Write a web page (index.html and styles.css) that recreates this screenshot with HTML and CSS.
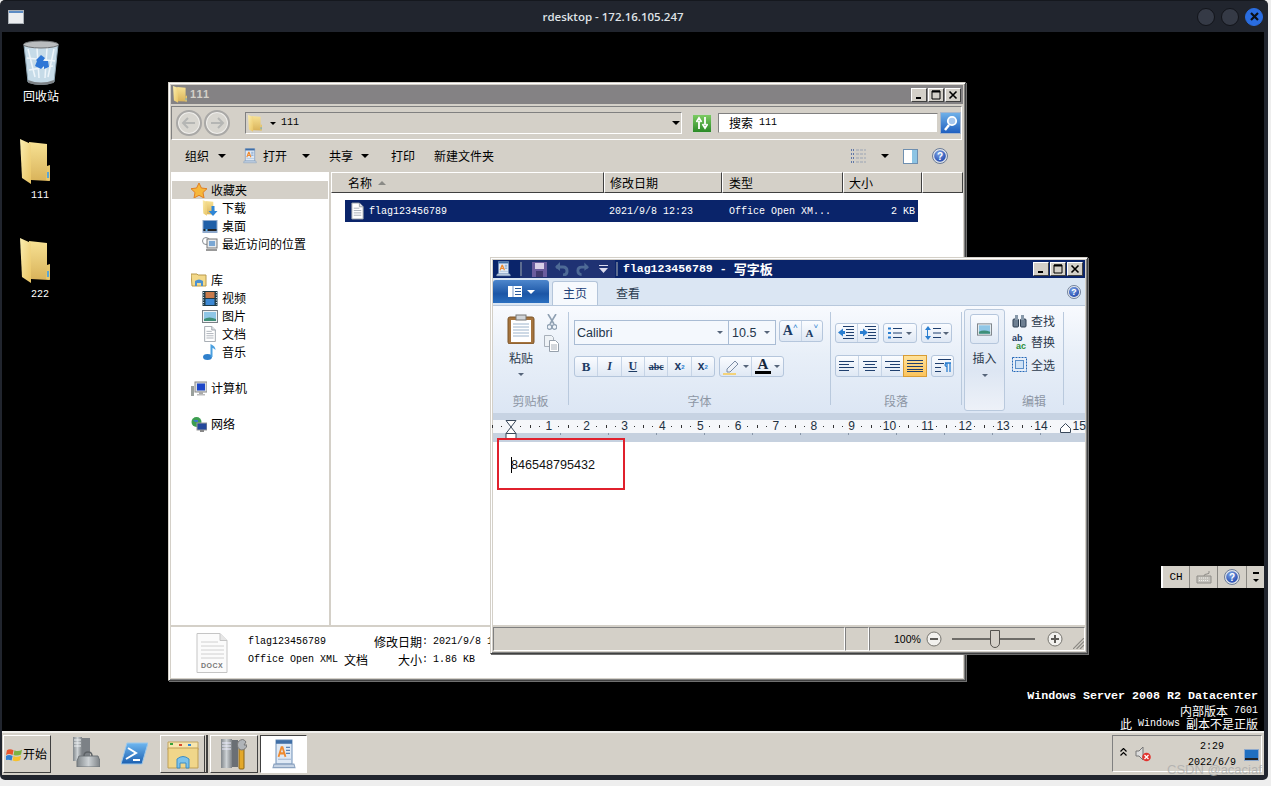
FILE: index.html
```html
<!DOCTYPE html>
<html lang="zh">
<head>
<meta charset="utf-8">
<title>rdesktop - 172.16.105.247</title>
<link rel="stylesheet" href="styles.css">
</head>
<body>
<svg class="defs" width="0" height="0" aria-hidden="true">
  <defs>
    <linearGradient id="gFolder" x1="0" y1="0" x2="1" y2="1"><stop offset="0" stop-color="#fbeeb0"/><stop offset="1" stop-color="#e9c463"/></linearGradient>
    <linearGradient id="gFolderBack" x1="0" y1="0" x2="0" y2="1"><stop offset="0" stop-color="#f7e193"/><stop offset="1" stop-color="#d9b35a"/></linearGradient>
    <linearGradient id="gBlue" x1="0" y1="0" x2="0" y2="1"><stop offset="0" stop-color="#6fb7f0"/><stop offset="1" stop-color="#1b5fb0"/></linearGradient>
    <linearGradient id="gSteel" x1="0" y1="0" x2="1" y2="0"><stop offset="0" stop-color="#80868a"/><stop offset=".5" stop-color="#cdd2d5"/><stop offset="1" stop-color="#7c8185"/></linearGradient>
    <radialGradient id="gHelp" cx=".4" cy=".3" r=".8"><stop offset="0" stop-color="#7ea6e6"/><stop offset="1" stop-color="#1a3fa8"/></radialGradient>
    <symbol id="i-folder" viewBox="0 0 30 46" preserveAspectRatio="none">
      <polygon points="9,3 27,5 27,37 29,37 29,42 11,41" fill="url(#gFolderBack)"/>
      <polygon points="27,27 30,26 30,42 26,41" fill="#e6c66c"/>
      <rect x="27" y="33" width="2" height="6" fill="#5aa6d6"/>
      <polygon points="0,0 11,5 11,45 2,39" fill="url(#gFolder)"/>
    </symbol>
    <symbol id="i-doc" viewBox="0 0 16 18">
      <path d="M2 .5h8l4 4v13H2z" fill="#fff" stroke="#9aa0a8"/>
      <path d="M10 .5v4h4" fill="#dfe3e8" stroke="#9aa0a8"/>
      <path d="M4 6h6M4 8.500h8M4 11h8M4 13.500h8" stroke="#a8aeb6"/>
    </symbol>
    <symbol id="i-wordpad" viewBox="0 0 24 26" preserveAspectRatio="none">
      <path d="M4 1h16v20H4z" fill="#dfe9f5" stroke="#6e8fb8"/>
      <path d="M4 1h16v3H4z" fill="#3f6ea6"/>
      <path d="M6.500 15l3-8h1l3 8M8 12h4" stroke="#ef8a30" stroke-width="1.800" fill="none"/>
      <path d="M14 7h4M14 9.500h4M14 12h4" stroke="#5a84b8"/>
      <path d="M6 17h13" stroke="#a8bcd6"/>
      <path d="M2 21h20l1 3H1z" fill="#c5d3e4" stroke="#8ca3c0"/>
    </symbol>
    <symbol id="i-x" viewBox="0 0 10 10"><path d="M1.500 1.500l7 7M8.500 1.500l-7 7" stroke="#000" stroke-width="1.600"/></symbol>
    <symbol id="i-max" viewBox="0 0 10 10"><path d="M1 1h8v8H1z" fill="none" stroke="#000"/><path d="M1 1.500h8" stroke="#000" stroke-width="2"/></symbol>
    <symbol id="i-min" viewBox="0 0 10 10"><path d="M2 8h5" stroke="#000" stroke-width="2"/></symbol>
    <symbol id="i-help" viewBox="0 0 16 16">
      <circle cx="8" cy="8" r="7.500" fill="#dfe3ea" stroke="#6a7b96"/>
      <circle cx="8" cy="8" r="5.800" fill="url(#gHelp)"/>
      <text x="8" y="11.500" class="help-q">?</text>
    </symbol>
    <symbol id="i-lines" viewBox="0 0 16 12"><path d="M0 .5h16M0 3.500h16M0 6.500h16M0 9.500h16M0 11.500h16" stroke="#1f3f6e"/></symbol>
    <symbol id="i-left" viewBox="0 0 16 12"><path d="M0 1.500h15M0 4.500h10M0 7.500h15M0 10.500h10" stroke="#1f3f6e"/></symbol>
    <symbol id="i-center" viewBox="0 0 16 12"><path d="M1 1.500h14M3 4.500h10M1 7.500h14M3 10.500h10" stroke="#1f3f6e"/></symbol>
    <symbol id="i-right" viewBox="0 0 16 12"><path d="M1 1.500h15M6 4.500h10M1 7.500h15M6 10.500h10" stroke="#1f3f6e"/></symbol>
    <symbol id="i-outdent" viewBox="0 0 16 14"><path d="M5 .5h11M8 3.500h8M8 6.500h8M8 9.500h8M5 12.500h11" stroke="#1f3f6e"/><path d="M5 6.500h2" stroke="#2a7ed0" stroke-width="3"/><path d="M0 6.500L5 2.500v8z" fill="#2a7ed0"/></symbol>
    <symbol id="i-indent" viewBox="0 0 16 14"><path d="M5 .5h11M8 3.500h8M8 6.500h8M8 9.500h8M5 12.500h11" stroke="#1f3f6e"/><path d="M0 6.500h3" stroke="#2a7ed0" stroke-width="3"/><path d="M8 6.500L3 2.500v8z" fill="#2a7ed0"/></symbol>
    <symbol id="i-caret-plus" viewBox="0 0 16 16"><circle cx="8" cy="8" r="7" fill="#f2f1ee" stroke="#77756f"/><path d="M4 8h8M8 4v8" stroke="#5d5b57" stroke-width="2"/></symbol>
    <symbol id="i-caret-minus" viewBox="0 0 16 16"><circle cx="8" cy="8" r="7" fill="#f2f1ee" stroke="#77756f"/><path d="M4 8h8" stroke="#5d5b57" stroke-width="2"/></symbol>
  </defs>
</svg>

<div class="screen">
  <header class="rd-top">
    <svg class="rd-icon" width="16" height="14" viewBox="0 0 16 14"><rect x=".5" y=".5" width="15" height="13" fill="#eceef0" stroke="#aab0b6"/><rect x="1" y="1" width="14" height="2" fill="#5d8cc4"/></svg>
    <div class="rd-title">rdesktop - 172.16.105.247</div>
    <div class="rd-btns">
      <span class="rd-btn"></span><span class="rd-btn"></span><span class="rd-btn rd-close"><svg width="9" height="9" viewBox="0 0 9 9"><path d="M1 1l7 7M8 1L1 8" stroke="#0c1016" stroke-width="2.200"/></svg></span>
    </div>
  </header>

  <main class="desk">
    <div class="dicon dicon-bin">
      <svg width="36" height="46" viewBox="0 0 36 46">
        <path d="M1 5h34l-4 37q-13 5-26 0z" fill="#c6dbe8" stroke="#8ea6b4"/>
        <path d="M5 9l7 28M14 8l2 30M24 8l-2 30M31 9l-6 28M4 18l28 3M6 30l24-4" stroke="#eef5fa" stroke-width="1.500" fill="none"/>
        <ellipse cx="18" cy="4.500" rx="17.500" ry="3.500" fill="#b9bcbe" stroke="#6f7275"/>
        <path d="M5 40q13 5 26 0l-.4 3q-12.600 4-25.200 0z" fill="#7c8084"/>
        <path d="M13 20l5-5 4 3-2 3h5l1 6-5 2v-3l-3 3-6-3 2-5z" fill="#2f77d6"/>
      </svg>
      <span class="dlabel">回收站</span>
    </div>
    <div class="dicon dicon-111">
      <svg class="dfolder" width="30" height="46"><use href="#i-folder"/></svg>
      <span class="dlabel dlabel-m">111</span>
    </div>
    <div class="dicon dicon-222">
      <svg class="dfolder" width="30" height="46"><use href="#i-folder"/></svg>
      <span class="dlabel dlabel-m">222</span>
    </div>

    <section class="win explorer">
      <div class="ex-title">
        <svg width="14" height="17"><use href="#i-folder"/></svg>
        <span class="ex-title-text">111</span>
        <div class="wbtns"><span class="wb"><svg width="10" height="10"><use href="#i-min"/></svg></span><span class="wb"><svg width="10" height="10"><use href="#i-max"/></svg></span><span class="wb"><svg width="10" height="10"><use href="#i-x"/></svg></span></div>
      </div>
      <div class="ex-addr">
        <span class="navb"><svg width="16" height="12" viewBox="0 0 16 12"><path d="M7 1L2 6l5 5M2 6h12" fill="none" stroke="#b5b6b4" stroke-width="2"/></svg></span>
        <span class="navb navb-2"><svg width="16" height="12" viewBox="0 0 16 12"><path d="M9 1l5 5-5 5M14 6H2" fill="none" stroke="#b5b6b4" stroke-width="2"/></svg></span>
        <div class="addrbox">
          <svg width="14" height="17"><use href="#i-folder"/></svg>
          <span class="caret caret-s addr-caret"></span>
          <span class="m addr-text">111</span>
          <span class="caret addr-drop"></span>
        </div>
        <span class="refresh"><svg width="12" height="14" viewBox="0 0 12 14"><path d="M3 13V5M0.500 6L3 2l2.500 4M9 1v8M6.500 8L9 12l2.500-4" fill="none" stroke="#fff" stroke-width="1.800"/></svg></span>
        <div class="searchbox"><span class="z">搜索</span><span class="m search-q">111</span></div>
        <span class="searchbtn"><svg width="15" height="17" viewBox="0 0 15 17"><circle cx="9" cy="6" r="4.200" fill="#a8c8ee" stroke="#fff" stroke-width="1.800"/><path d="M6 10l-4 5" stroke="#fff" stroke-width="2.400"/></svg></span>
      </div>
      <div class="ex-tool">
        <span class="z t-org">组织</span><span class="caret t-c1"></span>
        <svg class="t-open" width="14" height="16"><use href="#i-wordpad"/></svg>
        <span class="z t-opent">打开</span><span class="caret t-c2"></span>
        <span class="z t-share">共享</span><span class="caret t-c3"></span>
        <span class="z t-print">打印</span>
        <span class="z t-new">新建文件夹</span>
        <svg class="t-view" width="16" height="14" viewBox="0 0 16 14"><path d="M0 1h3M0 5h3M0 9h3M0 13h3" stroke="#6078a8" stroke-width="2" stroke-dasharray="1 1"/><path d="M5 1h10M5 5h10M5 9h10M5 13h10" stroke="#9aa4b4" stroke-dasharray="3 1"/></svg>
        <span class="caret t-c4"></span>
        <svg class="t-panel" width="15" height="15" viewBox="0 0 15 15"><rect x=".5" y=".5" width="14" height="14" fill="#fff" stroke="#6e8fb0"/><rect x="9" y="1" width="5" height="13" fill="#8cc4e4"/></svg>
        <svg class="t-help" width="16" height="16"><use href="#i-help"/></svg>
      </div>
      <div class="ex-main">
        <nav class="ex-nav">
          <div class="nr nr-sel"><svg class="nic" width="16" height="15" viewBox="0 0 16 15"><path d="M8 0l2.400 5 5.600.7-4 3.800 1 5.500-5-2.700L3 15l1-5.500-4-3.800L5.600 5z" fill="#f6b73c" stroke="#e07f22"/></svg><span class="z">收藏夹</span></div>
          <div class="nr nr-2"><svg class="nic" width="15" height="16" viewBox="0 0 15 16"><use href="#i-folder" width="12" height="16"/><path d="M9 6h3v5h3l-4.500 5L6 11h3z" fill="#2f86d6"/></svg><span class="z">下载</span></div>
          <div class="nr nr-2"><svg class="nic" width="15" height="13" viewBox="0 0 15 13"><rect width="15" height="13" fill="#8ea9cc"/><rect x="1" y="1" width="13" height="10" fill="#1f5fa8"/><rect x="1" y="9" width="13" height="2" fill="#222"/><rect x="3" y="9" width="2" height="2" fill="#58b0f0"/></svg><span class="z">桌面</span></div>
          <div class="nr nr-2"><svg class="nic" width="16" height="15" viewBox="0 0 16 15"><circle cx="4" cy="4" r="3.500" fill="#fff" stroke="#8a8f95"/><rect x="5" y="2" width="10" height="9" fill="#e6eaee" stroke="#777"/><rect x="7" y="4" width="6" height="5" fill="#7aa7d4"/><rect x="4" y="12" width="11" height="2" fill="#999"/></svg><span class="z">最近访问的位置</span></div>
          <div class="nr nr-gap"></div>
          <div class="nr nr-1"><svg class="nic" width="16" height="14" viewBox="0 0 16 14"><path d="M0 1h6l1 1h8v11H1z" fill="#f3d98a" stroke="#b99a4c"/><path d="M4 13V8q4-3 8 0v5h-2v-3H6v3z" fill="#4a90d0"/></svg><span class="z">库</span></div>
          <div class="nr nr-2"><svg class="nic" width="15" height="15" viewBox="0 0 15 15"><rect width="15" height="15" fill="#1e3a46"/><rect x="3" y="1" width="9" height="6" fill="#c87a4a"/><rect x="3" y="8" width="9" height="6" fill="#3c88d4"/><path d="M1 1v13M14 1v13" stroke="#cfe0ea" stroke-dasharray="1 1.500" stroke-width="1.200"/></svg><span class="z">视频</span></div>
          <div class="nr nr-2"><svg class="nic" width="16" height="13" viewBox="0 0 16 13"><rect x=".5" y=".5" width="15" height="12" fill="#eef1f3" stroke="#7a8086"/><rect x="2" y="2" width="12" height="9" fill="#8fc6e6"/><path d="M2 9q5-3 12 0v2H2z" fill="#3f8f78"/></svg><span class="z">图片</span></div>
          <div class="nr nr-2"><svg class="nic" width="15" height="16"><use href="#i-doc"/></svg><span class="z">文档</span></div>
          <div class="nr nr-2"><svg class="nic" width="15" height="16" viewBox="0 0 15 16"><ellipse cx="5" cy="13" rx="4.500" ry="3" fill="#2f80cc"/><path d="M8 13V0q5 2 5 6-2-2-3-2v9z" fill="#4ba0e0"/></svg><span class="z">音乐</span></div>
          <div class="nr nr-gap"></div>
          <div class="nr nr-1"><svg class="nic" width="16" height="15" viewBox="0 0 16 15"><rect x="4" y="1" width="12" height="10" fill="#d9dde0" stroke="#888"/><rect x="6" y="2.500" width="8" height="7" fill="#1c46c8"/><rect x="8" y="11" width="4" height="2" fill="#aaa"/><rect x="6" y="13" width="8" height="1.500" fill="#bbb"/><rect y="5" width="3" height="10" fill="#9aa09c"/></svg><span class="z">计算机</span></div>
          <div class="nr nr-gap"></div>
          <div class="nr nr-1"><svg class="nic" width="16" height="15" viewBox="0 0 16 15"><circle cx="5.500" cy="5" r="5" fill="#3c9e50"/><path d="M2 3h5v2H4zM6 7h3v2H7z" fill="#3a78cc"/><rect x="6" y="6" width="10" height="7" fill="#24489c" stroke="#999"/><rect x="9" y="13" width="4" height="2" fill="#888"/></svg><span class="z">网络</span></div>
        </nav>
        <div class="ex-list">
          <div class="lh">
            <div class="lc lc-name"><span class="z">名称</span><span class="sort"></span></div>
            <div class="lc lc-date"><span class="z">修改日期</span></div>
            <div class="lc lc-type"><span class="z">类型</span></div>
            <div class="lc lc-size"><span class="z">大小</span></div>
            <div class="lc lc-end"></div>
          </div>
          <div class="row">
            <svg class="row-ic" width="15" height="18"><use href="#i-doc"/></svg>
            <span class="m row-name">flag123456789</span>
            <span class="m row-date">2021/9/8 12:23</span>
            <span class="m row-type">Office Open XM...</span>
            <span class="m row-size">2 KB</span>
          </div>
        </div>
      </div>
      <footer class="ex-status">
        <svg class="docx" width="32" height="40" viewBox="0 0 32 40">
          <path d="M1 .5h23l7 7V39.500H1z" fill="#fbfbfb" stroke="#c5c5c5"/>
          <path d="M24 .5v7h7" fill="#e6e6e6" stroke="#c5c5c5"/>
          <path d="M5 9h17M5 13h23M5 17h23M5 21h23M5 25h23" stroke="#d0d0d0"/>
          <text x="16" y="35" class="docx-t">DOCX</text>
        </svg>
        <div class="st-cols">
          <div class="st-row"><span class="m st-a">flag123456789</span><span class="z">修改日期</span><span class="m">:</span><span class="m st-v">2021/9/8 12:23</span></div>
          <div class="st-row"><span class="m">Office Open XML</span><span class="z st-doc">文档</span><span class="z">大小</span><span class="m">:</span><span class="m st-v">1.86 KB</span></div>
        </div>
      </footer>
    </section>

    <section class="win wordpad">
      <div class="wp-title">
        <svg class="wpt-ic" width="15" height="16"><use href="#i-wordpad"/></svg>
        <span class="wpt-sep"></span>
        <svg class="wpt-save" width="15" height="15" viewBox="0 0 15 15"><rect width="15" height="15" fill="#6a5c9e"/><rect x="3" y="1" width="9" height="6" fill="#d8cfe8"/><rect x="4" y="9" width="7" height="6" fill="#403a70"/></svg>
        <svg class="wpt-undo" width="14" height="14" viewBox="0 0 14 14"><path d="M1 5h7q4 0 4 4t-4 4" fill="none" stroke="#4e6a96" stroke-width="3"/><path d="M5 0v9L0 5z" fill="#4e6a96"/></svg>
        <svg class="wpt-redo" width="13" height="14" viewBox="0 0 14 14"><path d="M13 5H6Q2 5 2 9t4 4" fill="none" stroke="#4e6a96" stroke-width="3"/><path d="M9 0v9l5-4z" fill="#4e6a96"/></svg>
        <svg class="wpt-menu" width="9" height="8" viewBox="0 0 9 8"><path d="M0 .5h9" stroke="#dde"/><path d="M0 3h9L4.500 8z" fill="#dde"/></svg>
        <span class="wpt-sep wpt-sep2"></span>
        <span class="wpt-name">flag123456789</span><span class="wpt-dash">-</span><span class="wpt-app">写字板</span>
        <div class="wbtns"><span class="wb"><svg width="10" height="10"><use href="#i-min"/></svg></span><span class="wb"><svg width="10" height="10"><use href="#i-max"/></svg></span><span class="wb"><svg width="10" height="10"><use href="#i-x"/></svg></span></div>
      </div>
      <div class="wp-tabs">
        <span class="appbtn"><svg width="14" height="11" viewBox="0 0 14 11"><rect width="14" height="11" fill="#fff"/><path d="M5 0v11" stroke="#7b9ccc"/><path d="M7 2.500h6M7 5.500h6M7 8.500h6" stroke="#2a5a9a"/></svg><span class="caret caret-w"></span></span>
        <span class="tab tab-on">主页</span>
        <span class="tab tab-2">查看</span>
        <svg class="wp-help" width="14" height="14"><use href="#i-help"/></svg>
      </div>
      <div class="ribbon">
        <div class="grp grp-clip">
          <div class="clip-body">
            <div class="paste">
              <svg width="28" height="30" viewBox="0 0 28 30"><rect x="1" y="3" width="26" height="27" rx="2" fill="#a5743e" stroke="#7d5528"/><rect x="4" y="6" width="20" height="22" fill="#fff"/><path d="M6 10h16M6 13h16M6 16h16M6 19h16M6 22h16" stroke="#9db4cc"/><rect x="9" y="1" width="10" height="5" fill="#d0d4d8" stroke="#777"/></svg>
              <span class="z paste-t">粘贴</span>
              <span class="caret caret-g"></span>
            </div>
            <div class="clip-side">
              <svg width="10" height="16" viewBox="0 0 10 16"><path d="M1 0l6 10M9 0L3 10" stroke="#8fa0b2" stroke-width="1.600"/><circle cx="2.500" cy="13" r="2.300" fill="none" stroke="#8fa0b2" stroke-width="1.300"/><circle cx="7.500" cy="13" r="2.300" fill="none" stroke="#8fa0b2" stroke-width="1.300"/></svg>
              <svg width="15" height="17" viewBox="0 0 15 17"><path d="M.5.500h7l2 2v9h-9z" fill="#eef2f6" stroke="#a8b0ba"/><path d="M5.500 5.500h6l3 3v8h-9z" fill="#fff" stroke="#96a0ac"/><path d="M7 10h6M7 12h6M7 14h6" stroke="#a8b0ba"/></svg>
            </div>
          </div>
          <span class="glabel">剪贴板</span>
        </div>
        <div class="grp grp-font">
          <div class="font-row1">
            <span class="combo combo-font"><span class="combo-t">Calibri</span><span class="caret caret-g"></span></span>
            <span class="combo combo-size"><span class="combo-t">10.5</span><span class="caret caret-g"></span></span>
            <span class="bgroup grow"><span class="cell"><b class="gl gl-b">A</b><i class="sup-c">˄</i></span><span class="cell"><b class="gl gl-s">A</b><i class="sup-b">˅</i></span></span>
          </div>
          <div class="font-row2">
            <span class="bgroup fmt">
              <span class="cell cf fb">B</span><span class="cell cf fi">I</span><span class="cell cf fu">U</span><span class="cell cf fs">abc</span><span class="cell cf fx">x<sub>2</sub></span><span class="cell cf fx">x<sup>2</sup></span>
            </span>
            <span class="bgroup hl">
              <span class="cell hl-a"><svg width="17" height="16" viewBox="0 0 17 16"><path d="M4 10l8-8 3 3-8 8H4z" fill="#eef2f8" stroke="#7a8ba4"/><path d="M0 15h13" stroke="#f3d27a" stroke-width="2"/></svg><span class="caret caret-g"></span></span>
              <span class="cell hl-b"><span class="colorA">A</span><span class="caret caret-g"></span></span>
            </span>
          </div>
          <span class="glabel">字体</span>
        </div>
        <div class="grp grp-para">
          <div class="para-row1">
            <span class="bgroup b44"><span class="cell c22"><svg width="16" height="14"><use href="#i-outdent"/></svg></span><span class="cell c22"><svg width="16" height="14"><use href="#i-indent"/></svg></span></span>
            <span class="bgroup b34"><svg width="14" height="12" viewBox="0 0 14 12"><path d="M5 1.500h9M5 6h9M5 10.500h9" stroke="#1f3f6e"/><path d="M0 .5h3v2H0zM0 5h3v2H0zM0 9.500h3v2H0z" fill="#2a7ed0"/></svg><span class="caret caret-g"></span></span>
            <span class="bgroup b31"><svg width="16" height="14" viewBox="0 0 16 14"><path d="M3 0L0 4h6zM3 14L0 10h6z" fill="#2a7ed0"/><path d="M2.500 3v8" stroke="#2a7ed0"/><path d="M8 2.500h8M8 7h8M8 11.500h8" stroke="#1f3f6e"/></svg><span class="caret caret-g"></span></span>
          </div>
          <div class="para-row2">
            <span class="bgroup b92"><span class="cell c23"><svg width="16" height="12"><use href="#i-left"/></svg></span><span class="cell c23"><svg width="16" height="12"><use href="#i-center"/></svg></span><span class="cell c23"><svg width="16" height="12"><use href="#i-right"/></svg></span><span class="cell c23 cell-on"><svg width="16" height="12"><use href="#i-lines"/></svg></span></span>
            <span class="bgroup b23"><svg width="16" height="14" viewBox="0 0 16 14"><path d="M3 .5h13M0 4.500h9M0 8.500h6M0 12.500h6" stroke="#1f3f6e"/><path d="M10 4h6M12 4v9M15 4v9M12 8q-4-2 0-4" fill="none" stroke="#2a7ed0" stroke-width="1.300"/></svg></span>
          </div>
          <span class="glabel">段落</span>
        </div>
        <div class="grp-insert">
          <span class="ins-btn"><svg width="15" height="13" viewBox="0 0 16 13"><rect x=".5" y=".5" width="15" height="12" fill="#eef1f3" stroke="#7a8086"/><rect x="2" y="2" width="12" height="9" fill="#8fc6e6"/><path d="M2 9q5-3 12 0v2H2z" fill="#3f8f78"/></svg></span>
          <span class="z ins-t">插入</span>
          <span class="caret caret-g"></span>
        </div>
        <div class="grp grp-edit">
          <div class="ed"><svg width="15" height="14" viewBox="0 0 15 14"><rect x="1" y="5" width="5.500" height="8" rx="1" fill="#6e7f92" stroke="#2e3f52"/><rect x="8.500" y="5" width="5.500" height="8" rx="1" fill="#6e7f92" stroke="#2e3f52"/><rect x="3" y="1" width="3" height="5" fill="#8899aa"/><rect x="9" y="1" width="3" height="5" fill="#8899aa"/></svg><span class="z">查找</span></div>
          <div class="ed"><span class="abac"><b class="ab">ab</b><b class="ac">ac</b></span><span class="z">替换</span></div>
          <div class="ed ed3"><svg width="15" height="15" viewBox="0 0 15 15"><rect x=".5" y=".5" width="14" height="14" fill="none" stroke="#2468b8" stroke-dasharray="2 1"/><rect x="3.500" y="3.500" width="8" height="8" fill="#cfe2f6" stroke="#5a8ec8"/></svg><span class="z">全选</span></div>
          <span class="glabel">编辑</span>
        </div>
      </div>
      <div class="rb-strip"></div>
      <div class="ruler">
        <div class="r-top">
          <span class="rn rn-0"></span><span class="rn">1</span><span class="rn">2</span><span class="rn">3</span><span class="rn">4</span><span class="rn">5</span><span class="rn">6</span><span class="rn">7</span><span class="rn">8</span><span class="rn">9</span><span class="rn">10</span><span class="rn">11</span><span class="rn">12</span><span class="rn">13</span><span class="rn">14</span><span class="rn rn-last">15</span>
        </div>
        <div class="r-bot"></div>
        <svg class="indent-l" width="12" height="20" viewBox="0 0 12 20"><path d="M1 .5h10L6 7l5 6.500v6H1v-6L6 7z" fill="#fff" stroke="#39485a"/><path d="M1 13.500h10" stroke="#39485a"/></svg>
        <svg class="indent-r" width="11" height="10" viewBox="0 0 11 10"><path d="M5.500.5l5 5v4H.5v-4z" fill="#fff" stroke="#39485a"/></svg>
      </div>
      <div class="doc"><span class="cursor"></span><span class="doc-t">846548795432</span></div>
      <footer class="wp-status">
        <span class="ss ss-1"></span><span class="ss ss-2"></span>
        <div class="ss ss-3">
          <span class="zoom-t">100%</span>
          <svg class="zm" width="16" height="16"><use href="#i-caret-minus"/></svg>
          <span class="slider"><span class="thumb"></span></span>
          <svg class="zp" width="16" height="16"><use href="#i-caret-plus"/></svg>
          <svg class="grip" width="11" height="11" viewBox="0 0 11 11"><path d="M11 0L0 11M11 3.500L3.500 11M11 7l-4 4" stroke="#8a8883" stroke-width="1.200"/></svg>
        </div>
      </footer>
    </section>

    <div class="redbox"></div>

    <div class="langbar">
      <span class="lb lb-ch">CH</span>
      <span class="lb lb-k"><svg width="16" height="14" viewBox="0 0 16 14"><path d="M1 6h14v7H1z" fill="#c4c2bc" stroke="#8f8d88"/><path d="M3 8h10M3 10.500h10" stroke="#f0efea" stroke-dasharray="1 1"/><path d="M8 6q0-2 3-2t2-3" fill="none" stroke="#8f8d88"/></svg></span>
      <span class="lb lb-h"><svg width="16" height="16"><use href="#i-help"/></svg></span>
      <span class="lb lb-more"><i class="dash"></i><span class="caret caret-s"></span></span>
    </div>

    <div class="wmark">
      <div class="wm-1">Windows Server 2008 R2 Datacenter</div>
      <div class="wm-2"><span class="wz">内部版本</span><span class="wl wl-g">7601</span></div>
      <div class="wm-2"><span class="wz">此</span><span class="wl wl-g">Windows</span><span class="wz wz-g">副本不是正版</span></div>
    </div>

    <div class="taskbar">
      <span class="start">
        <svg width="16" height="15" viewBox="0 0 17 15"><path d="M1 3q3-2 7 0l-1 5q-4-2-7 0z" fill="#e8552e"/><path d="M9 3q4 2 8-.500l-1 5q-4 2-8 .500z" fill="#7cb342"/><path d="M0 9q3-2 7 0l-1 5q-4-2-7 0z" fill="#2f7fd4"/><path d="M8 9q4 2 8-.500l-1 5q-4 2-8 .500z" fill="#f6c12e"/></svg>
        <span class="z start-t">开始</span>
      </span>
      <span class="tq tq-tool"><svg width="28" height="30" viewBox="0 0 28 30"><rect x="1" y="0" width="9" height="24" fill="url(#gSteel)"/><rect x="10" y="1" width="8" height="20" fill="#7c8186"/><path d="M2 3h7M2 6h7M2 9h7" stroke="#eef1f3"/><path d="M7 19h19l2 5v6H5v-6z" fill="url(#gSteel)" stroke="#6f7579"/><path d="M12 19q0-4 4-4t4 4" fill="none" stroke="#5d6266" stroke-width="1.500"/></svg></span>
      <span class="tq tq-ps"><svg width="27" height="23" viewBox="0 0 27 23"><path d="M6 1h21l-6 21H0z" fill="url(#gBlue)" stroke="#9cc8ea"/><path d="M7 6l8 5-10 6M12 18h7" fill="none" stroke="#fff" stroke-width="2"/></svg></span>
      <span class="tb tb-folder"><svg width="32" height="29" viewBox="0 0 32 29"><path d="M1 2h30v8H1z" fill="#f7e6ae" stroke="#c2a45e"/><rect x="3" y="3" width="3" height="2" fill="#37a33a"/><rect x="12" y="4" width="3" height="2" fill="#d84a2e"/><rect x="21" y="4" width="3" height="2" fill="#2f86d6"/><path d="M1 8h30v20H1z" fill="#f0d68a" stroke="#bf9f55"/><path d="M10 28v-9q6-5 12 0v9h-3v-5h-6v5z" fill="#7cc2ea" stroke="#3d8dc4"/></svg></span>
      <span class="tb-ext"></span>
      <span class="tb tb-admin"><svg width="26" height="32" viewBox="0 0 26 32"><rect x="0" y="1" width="11" height="29" fill="url(#gSteel)"/><path d="M1 5h9M1 8h9M1 11h9" stroke="#eef"/><rect x="11" y="2" width="6" height="27" fill="#6a6f74"/><rect x="18" y="10" width="5" height="21" rx="1" fill="#e3a82a" stroke="#8a6516"/><path d="M17 4q5-5 8 0l-2 3 3 0q-1 5-6 5-5-2-3-8z" fill="#b0b4b8" stroke="#777"/></svg></span>
      <span class="tb tb-on"><svg width="24" height="31"><use href="#i-wordpad"/></svg></span>
      <div class="tray">
        <svg class="tr-up" width="7" height="8" viewBox="0 0 7 8"><path d="M.5 3.500l3-3 3 3M.5 7.500l3-3 3 3" fill="none" stroke="#000" stroke-width="1.200"/></svg>
        <svg class="tr-spk" width="16" height="16" viewBox="0 0 16 16"><path d="M1 5h3l4-4v13l-4-4H1z" fill="#dcdcdc" stroke="#777"/><circle cx="11.500" cy="11" r="4.300" fill="#e2332f"/><path d="M9.500 9l4 4M13.500 9l-4 4" stroke="#fff" stroke-width="1.300"/></svg>
        <div class="clock"><span class="m">2:29</span><span class="m">2022/6/9</span></div>
        <svg class="tr-desk" width="15" height="12" viewBox="0 0 15 12"><rect width="15" height="12" fill="#8ea9cc"/><rect x="1" y="1" width="13" height="10" fill="#1f6fc0"/><rect x="1" y="9" width="13" height="2" fill="#222"/></svg>
      </div>
    </div>
    <div class="csdn">CSDN @acaciaf</div>
  </main>
  <div class="rd-bottom"></div>
</div>
</body>
</html>
```

FILE: styles.css
```css
* { box-sizing: border-box; }
html, body { margin: 0; padding: 0; background: #eeeeee; }
body { width: 1271px; height: 786px; overflow: hidden; font-family: "Liberation Mono", "Noto Sans CJK SC", monospace; color: #000; }
.defs { position: absolute; }
svg { display: block; flex: none; }
.z { font: 12px/16px "Noto Sans CJK SC", sans-serif; white-space: nowrap; }
.m { font: 10px/16px "Liberation Mono", monospace; white-space: nowrap; }
.help-q { font: bold 10px "Liberation Sans", sans-serif; fill: #fff; text-anchor: middle; }
.docx-t { font: bold 7px "Liberation Sans", sans-serif; fill: #777; text-anchor: middle; letter-spacing: .5px; }

.caret { display: inline-block; width: 0; height: 0; border-top: 4px solid #000; border-left: 4px solid transparent; border-right: 4px solid transparent; flex: none; }
.caret-s { border-top-width: 3px; border-left-width: 3px; border-right-width: 3px; }
.caret-g { border-top: 3px solid #56657a; border-left: 3px solid transparent; border-right: 3px solid transparent; }
.caret-w { border-top-color: #fff; }

.screen { width: 1268px; height: 786px; display: flex; flex-direction: column; }
.rd-top { height: 32px; background: #21252e; border-top: 1px solid #15181e; border-radius: 5px 5px 0 0; display: flex; align-items: center; position: relative; padding-left: 8px; flex: none; }
.rd-title { position: absolute; left: 0; width: 1226px; text-align: center; color: #dfe2e6; font: 600 11.500px/30px "Open Sans", sans-serif; }
.rd-btns { margin-left: auto; margin-right: 5px; display: flex; gap: 6px; }
.rd-btn { width: 18px; height: 18px; border-radius: 50%; background: #353a46; border: 1px solid #12141a; display: flex; align-items: center; justify-content: center; }
.rd-close { background: #2a6de0; border-color: #2a6de0; }

.desk { height: 743px; background: #000; border-left: 2px solid #21252e; border-right: 4px solid #21252e; position: relative; flex: none; display: flex; flex-direction: column; justify-content: flex-end; }
.rd-bottom { height: 5px; background: #21252e; border-radius: 0 0 5px 5px; flex: none; }

.dicon { position: absolute; display: flex; flex-direction: column; align-items: center; color: #fff; width: 70px; }
.dicon-bin { left: 4px; top: 8px; }
.dicon-111 { left: 3px; top: 107px; }
.dicon-222 { left: 3px; top: 206px; }
.dfolder { margin-right: 10px; }
.dlabel { font: 12px/16px "Noto Sans CJK SC", sans-serif; margin-top: 2px; }
.dlabel-m { font: 10px/16px "Liberation Mono", monospace; margin-top: 3px; }

.win { position: absolute; background: #d4d0c8; border: 1px solid; border-color: #d4d0c8 #404040 #404040 #d4d0c8; box-shadow: inset 1px 1px 0 #fff, inset -1px -1px 0 #808080, 1px 1px 0 #707070; padding: 2px; display: flex; flex-direction: column; }
.explorer { left: 166px; top: 50px; width: 798px; height: 599px; }
.ex-title { height: 19px; background: #848284; display: flex; align-items: center; padding-left: 2px; flex: none; margin-bottom: 2px; }
.ex-title-text { font: bold 11px/19px "Liberation Sans", sans-serif; color: #d4d0c8; letter-spacing: 1px; margin-left: 3px; }
.wbtns { margin-left: auto; display: flex; gap: 1px; margin-right: 2px; }
.wb { width: 16px; height: 14px; background: #d4d0c8; border: 1px solid; border-color: #fff #404040 #404040 #fff; display: flex; align-items: center; justify-content: center; }

.ex-addr { height: 34px; flex: none; border: 1px solid #808080; border-right-color: #fff; border-bottom-color: #fff; margin-right: 1px; display: flex; align-items: center; padding-left: 4px; }
.navb { width: 26px; height: 26px; border-radius: 50%; background: #d8d6d0; border: 2px solid #a9a8a6; box-shadow: inset 0 0 0 1px #f0efec; display: flex; align-items: center; justify-content: center; }
.navb-2 { margin-left: 2px; }
.addrbox { width: 437px; height: 22px; margin-left: 15px; border: 1px solid; border-color: #808080 #fff #fff #808080; display: flex; align-items: center; padding-left: 2px; }
.addr-caret { margin-left: 8px; }
.addr-text { margin-left: 5px; }
.addr-drop { margin-left: auto; margin-right: 1px; }
.refresh { width: 20px; height: 19px; margin-left: 10px; background: linear-gradient(#7ccb62, #2b8a26); border: 1px solid #cfd4c8; display: flex; align-items: center; justify-content: center; }
.searchbox { width: 220px; height: 20px; margin-left: 6px; background: #fff; border: 1px solid; border-color: #808080 #d4d0c8 #d4d0c8 #808080; display: flex; align-items: center; padding-left: 10px; }
.search-q { margin-left: 6px; }
.searchbtn { width: 21px; height: 22px; margin-left: 2px; background: linear-gradient(#6fb0e8, #1f5fc0); border: 1px solid #a7b6cc; display: flex; align-items: center; justify-content: center; }

.ex-tool { height: 32px; flex: none; display: flex; align-items: center; }
.t-org { margin-left: 14px; }
.t-c1 { margin-left: 9px; }
.t-open { margin-left: 17px; }
.t-opent { margin-left: 6px; }
.t-c2 { margin-left: 15px; }
.t-share { margin-left: 19px; }
.t-c3 { margin-left: 8px; }
.t-print { margin-left: 22px; }
.t-new { margin-left: 19px; }
.t-view { margin-left: auto; }
.t-c4 { margin-left: 14px; }
.t-panel { margin-left: 14px; }
.t-help { margin-left: 14px; margin-right: 15px; }

.ex-main { height: 453px; flex: none; display: flex; gap: 2px; }
.ex-nav { width: 158px; background: #fff; padding: 9px 1px 0 1px; flex: none; }
.nr { height: 18px; display: flex; align-items: center; }
.nr-sel { background: #d4d0c8; padding-left: 19px; }
.nr-1 { padding-left: 19px; }
.nr-2 { padding-left: 30px; }
.nic { margin-right: 4px; }
.nr-2 .nic { width: 16px; }

.ex-list { flex: 1; background: #fff; display: flex; flex-direction: column; }
.lh { display: flex; height: 21px; flex: none; background: #d4d0c8; }
.lc { border: 1px solid; border-color: #fff #404040 #404040 #fff; display: flex; align-items: center; padding-left: 5px; }
.lc-name { width: 273px; padding-left: 16px; }
.lc-date { width: 118px; }
.lc-type { width: 121px; padding-left: 6px; }
.lc-size { width: 79px; }
.lc-end { flex: 1; }
.sort { width: 0; height: 0; border-bottom: 4px solid #8a8a86; border-left: 4px solid transparent; border-right: 4px solid transparent; margin-left: 6px; }
.row { margin: 7px 0 0 14px; width: 573px; height: 22px; background: #0a246a; color: #fff; display: flex; align-items: center; padding: 1px 0 0 5px; }
.row-ic { margin-top: -1px; }
.row-name { margin-left: 4px; width: 240px; }
.row-date { width: 120px; }
.row-type { width: 162px; }
.row-size { width: 24px; text-align: right; }

.ex-status { height: 51px; margin-top: 2px; flex: none; background: #fff; display: flex; align-items: center; padding-left: 25px; overflow: hidden; }
.st-cols { margin: -3px 0 0 20px; display: flex; flex-direction: column; gap: 2px; }
.st-row { display: flex; align-items: center; height: 16px; }
.st-a { width: 126px; }
.st-v { margin-left: 5px; }
.st-doc { margin-left: 6px; width: 54px; }

.wordpad { left: 488px; top: 225px; width: 598px; height: 397px; }
.wp-title { height: 18px; background: linear-gradient(90deg, #0a246a 0 27px, #1f3273 27px 122px, #0a246a 122px); display: flex; align-items: center; padding-left: 3px; flex: none; color: #fff; }
.wpt-sep { width: 2px; height: 14px; background: #5c6c90; margin-left: 9px; }
.wpt-save { margin-left: 10px; }
.wpt-undo { margin-left: 8px; }
.wpt-redo { margin-left: 7px; }
.wpt-menu { margin-left: 10px; }
.wpt-sep2 { margin-left: 8px; }
.wpt-name { margin-left: 5px; font: bold 11.500px/18px "Liberation Mono", monospace; }
.wpt-dash { margin: 0 7px; font: bold 11.500px/18px "Liberation Mono", monospace; }
.wpt-app { font: 700 13px/18px "Noto Sans CJK SC", sans-serif; }

.wp-tabs { height: 27px; flex: none; background: #dbe6f3; display: flex; align-items: flex-end; position: relative; }
.appbtn { width: 56px; height: 23px; margin-bottom: 2px; background: linear-gradient(#4d86cc, #1c56a6 60%, #2a6fc0); border-radius: 3px 3px 0 0; display: flex; align-items: center; justify-content: center; gap: 5px; }
.tab { font: 12px/24px "Noto Sans CJK SC", sans-serif; height: 24px; color: #2a3a4e; width: 46px; text-align: center; }
.tab-on { margin-left: 3px; background: #f6f9fd; border: 1px solid #b4c5da; border-bottom: 0; border-radius: 3px 3px 0 0; color: #1c3f78; line-height: 22px; }
.tab-2 { margin-left: 7px; }
.wp-help { margin-left: auto; margin-right: 4px; margin-bottom: 6px; }

.ribbon { height: 108px; flex: none; display: flex; background: linear-gradient(#f8fafe, #e8eff8 45%, #dce6f4); border-top: 1px solid #b8c8dc; }
.grp { display: flex; flex-direction: column; position: relative; border-right: 1px solid #b9c9dd; height: 93px; margin-top: 6px; flex: none; }
.glabel { position: absolute; left: 0; right: 0; bottom: -4px; text-align: center; font: 12px/16px "Noto Sans CJK SC", sans-serif; color: #8d96a4; }
.grp-clip { width: 76px; }
.clip-body { display: flex; padding: 2px 0 0 14px; height: 100%; }
.paste { width: 28px; display: flex; flex-direction: column; align-items: center; }
.paste-t { margin-top: 6px; color: #2c3a4d; }
.paste .caret { margin-top: 7px; }
.clip-side { margin-left: 9px; display: flex; flex-direction: column; align-items: center; gap: 5px; }
.grp-font { width: 262px; padding-left: 5px; }
.font-row1 { display: flex; margin-top: 8px; }
.font-row2 { display: flex; margin-top: 11px; gap: 4px; }
.combo { height: 25px; background: #f4f8fd; border: 1px solid #a9bcd4; display: flex; align-items: center; justify-content: space-between; padding: 0 5px 0 2px; color: #24364c; }
.combo-t { font: 12.500px/20px "Liberation Sans", sans-serif; }
.combo-font { width: 155px; }
.combo-size { width: 47px; border-left: 0; padding-left: 3px; }
.bgroup { background: linear-gradient(#fafcff, #dfe8f4); border: 1px solid #b5c6dc; border-radius: 3px; display: flex; align-items: center; flex: none; }
.cell { height: 100%; display: flex; align-items: center; justify-content: center; border-right: 1px solid #c6d4e6; flex: 1; color: #1e3c64; }
.cell:last-child { border-right: 0; }
.grow { width: 44px; height: 22px; margin-left: 3px; }
.gl { font-family: "Liberation Serif", serif; }
.gl-b { font-size: 14px; }
.gl-s { font-size: 11px; margin-top: 3px; }
.sup-c, .sup-b { font: 8px/8px "Liberation Sans", sans-serif; color: #2a7ed0; align-self: flex-start; margin-top: 2px; }
.fmt { width: 141px; height: 21px; }
.cf { font: bold 12px/19px "Liberation Serif", serif; }
.fb { font-size: 13px; }
.fi { font-style: italic; }
.fu { text-decoration: underline; }
.fs { font-size: 10px; text-decoration: line-through; }
.fx { font-family: "Liberation Sans", sans-serif; font-size: 12px; }
.fx sub, .fx sup { font-size: 6px; color: #2a7ed0; line-height: 0; }
.hl { width: 65px; height: 21px; }
.hl-a, .hl-b { gap: 3px; }
.colorA { font: bold 15px/11px "Liberation Serif", serif; color: #16263c; border-bottom: 3px solid #000; width: 16px; text-align: center; height: 15px; }
.grp-para { width: 131px; padding-left: 4px; }
.para-row1 { display: flex; gap: 4px; margin-top: 11px; }
.para-row2 { display: flex; gap: 4px; margin-top: 12px; }
.b44 { width: 44px; height: 20px; }
.c22 { width: 22px; }
.b34 { width: 34px; height: 20px; justify-content: center; gap: 4px; }
.b31 { width: 31px; height: 20px; justify-content: center; gap: 2px; }
.b92 { width: 92px; height: 22px; }
.c23 { width: 23px; }
.cell-on { background: linear-gradient(#ffe29a, #fbc35c); outline: 1px solid #d89c35; }
.b23 { width: 23px; height: 22px; justify-content: center; }
.grp-insert { width: 41px; height: 102px; margin: 3px 0 0 2px; border: 1px solid #b9c9dd; border-radius: 3px; background: linear-gradient(#eef3fa, #dde6f3 60%, #edf1f8); display: flex; flex-direction: column; align-items: center; flex: none; padding-top: 4px; }
.ins-btn { width: 29px; height: 30px; border: 1px solid #b5c6dc; border-radius: 3px; background: linear-gradient(#fafcff, #dfe8f4); display: flex; align-items: center; justify-content: center; margin-bottom: 6px; }
.ins-t { color: #2c3a4d; margin-bottom: 8px; }
.grp-edit { width: 59px; padding: 0 0 0 7px; }
.ed { display: flex; align-items: center; gap: 4px; height: 21px; color: #2c3a4d; }
.ed:first-child { margin-top: -2px; }
.ed3 { margin-top: 2px; }
.abac { width: 15px; height: 16px; display: flex; flex-direction: column; font: bold 9px/8px "Liberation Sans", sans-serif; }
.ab { color: #1e3c64; }
.ac { color: #2f8f3a; padding-left: 4px; }

.rb-strip { height: 7px; background: #c7d3e3; flex: none; }
.ruler { height: 22px; flex: none; position: relative; background: #c6d1df; }
.r-top { height: 13px; background: #f5f7fa; display: flex; }
.rn { width: 37.860px; text-align: center; font: 12px/13px "Liberation Sans", sans-serif; color: #22303f; flex: none; background-image: linear-gradient(#333, #333), linear-gradient(#333, #333), linear-gradient(#333, #333); background-size: 1px 1px, 1px 1px, 1px 3px; background-position: 9px 6px, 28px 6px, 0 5px; background-repeat: no-repeat; }
.rn-0 { margin-left: -1px; }
.rn-last { width: 16px; text-align: right; background-size: 0 0; margin-left: 10px; padding: 0; }
.r-bot { height: 9px; background: #c6d1df repeating-linear-gradient(90deg, transparent 0 19px, #8796a8 19px 20px, transparent 20px 48px) 0 0 / 100% 2px no-repeat; }
.indent-l { position: absolute; left: 12px; top: 0; }
.indent-r { position: absolute; left: 567px; top: 3px; }

.doc { height: 183px; flex: none; background: #fff; padding: 15px 0 0 18px; display: flex; align-items: flex-start; position: relative; }
.cursor { width: 1px; height: 16px; background: #000; position: absolute; left: 18px; top: 15px; }
.doc-t { font: 12.600px/16px "Liberation Sans", sans-serif; color: #111; }

.wp-status { height: 24px; margin-top: 2px; flex: none; display: flex; background: #d4d0c8; }
.ss { border: 1px solid; border-color: #808080 #fff #fff #808080; height: 100%; flex: none; }
.ss-1 { width: 352px; }
.ss-2 { width: 24px; }
.ss-3 { flex: 1; min-width: 0; display: flex; align-items: center; padding-left: 24px; }
.zoom-t { font: 10.500px/14px "Liberation Sans", sans-serif; width: 24px; white-space: nowrap; }
.zm { margin-left: 8px; }
.slider { width: 83px; height: 2px; margin-left: 10px; background: #6e6c68; position: relative; flex: none; }
.thumb { position: absolute; left: 38px; top: -8px; width: 10px; height: 18px; background: #d4d0c8; border: 1px solid #55534f; border-radius: 0 0 5px 5px; }
.zp { margin-left: 12px; }
.grip { margin-left: 10px; align-self: flex-end; margin-bottom: 1px; }

.redbox { position: absolute; left: 495px; top: 406px; width: 128px; height: 52px; border: 2px solid #e0202c; }

.langbar { position: absolute; left: 1159px; top: 534px; width: 103px; height: 22px; background: #d4d0c8; display: flex; border-left: 2px solid #fff; }
.lb { height: 100%; flex: none; display: flex; align-items: center; justify-content: center; border-left: 1px solid #8a8883; }
.lb-ch { font: 11px/16px "Liberation Mono", monospace; width: 26px; border-left: 0; }
.lb-k { width: 28px; }
.lb-h { width: 29px; }
.lb-more { width: 18px; flex-direction: column; gap: 5px; }
.dash { width: 6px; height: 2px; background: #000; display: block; }

.wmark { position: absolute; right: 6px; top: 656px; color: #fff; display: flex; flex-direction: column; align-items: flex-end; }
.wm-1 { font: bold 11.670px/16px "Liberation Mono", monospace; white-space: nowrap; height: 16px; }
.wm-2 { height: 13px; display: flex; white-space: nowrap; }
.wz { font: 12px/13px "Noto Sans CJK SC", sans-serif; }
.wl { font: 10px/13px "Liberation Mono", monospace; }
.wl-g, .wz-g { margin-left: 6px; }

.taskbar { height: 44px; flex: none; background: #d4d0c8; border-top: 2px solid #f0efec; display: flex; align-items: flex-start; padding: 2px 0 0 1px; position: relative; }
.start { width: 48px; height: 38px; background: #d4d0c8; border: 1px solid; border-color: #fff #404040 #404040 #fff; display: flex; align-items: center; padding-left: 2px; flex: none; gap: 1px; }
.start-t { color: #000; }
.tq { display: flex; flex: none; margin-top: 2px; }
.tq-tool { margin-left: 21px; }
.tq-ps { margin-left: 21px; margin-top: 7px; }
.tb { width: 48px; height: 38px; border: 1px solid; border-color: #fff #404040 #404040 #fff; display: flex; align-items: center; justify-content: center; flex: none; }
.tb-folder { margin-left: 12px; width: 45px; }
.tb-ext { width: 3px; height: 38px; background: #d4d0c8; border-right: 2px solid #404040; border-bottom: 1px solid #404040; margin-right: 2px; flex: none; }
.tb-on { margin-left: 2px; background: #fff; border-color: #404040 #fff #fff #404040; width: 47px; }
.tray { position: absolute; left: 1110px; top: 2px; width: 150px; height: 37px; border: 1px solid; border-color: #808080 #fff #fff #808080; display: flex; align-items: center; }
.tr-up { margin-left: 7px; margin-top: -4px; }
.tr-spk { margin-left: 8px; }
.clock { width: 60px; margin: 2px 0 0 31px; display: flex; flex-direction: column; align-items: center; }
.tr-desk { margin-left: 2px; margin-top: 3px; }
.csdn { position: absolute; left: 1165px; top: 730px; font: 13px/16px "Liberation Sans", sans-serif; color: rgba(170,170,170,.75); white-space: nowrap; }
```
